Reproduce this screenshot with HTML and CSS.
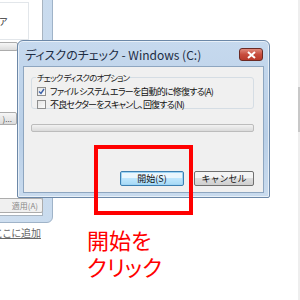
FILE: index.html
```html
<!DOCTYPE html>
<html lang="ja">
<head>
    <meta charset="UTF-8">
    <meta name="viewport" content="width=device-width, initial-scale=1.0">
    <title>ディスクのチェック</title>
    <link rel="stylesheet" href="styles.css">
</head>
<body>
    <div class="desktop">
        <!-- window behind the dialog -->
        <div class="bgwin">
            <div class="bgpane">
                <div class="bgbox"><span>ア</span></div>
                <div class="bgbtn bgbtn-a"></div>
                <div class="bgbtn bgbtn-b">)...</div>
                <div class="bgbtn bgbtn-apply">適用(A)</div>
            </div>
        </div>
        <a class="bglink">ここに追加</a>
        <div class="scroll-edge"><div class="scroll-thumb"></div></div>

        <div class="dialog">
            <div class="titlebar">
                <span class="title">ディスクのチェック - Windows (C:)</span>
                <button class="close">
                    <svg width="11" height="8" viewBox="0 0 11 8">
                        <path d="M2 1 L9 7 M9 1 L2 7" stroke="#fff" stroke-width="2" fill="none"/>
                    </svg>
                </button>
            </div>
            <div class="content">
                <fieldset class="group">
                    <legend>チェック ディスクのオプション</legend>
                    <label class="check">
                        <span class="box checked">
                            <svg width="7" height="7" viewBox="0 0 7 7">
                                <path d="M1 3.5 L3 5.5 L6 1" stroke="#3a5fa8" stroke-width="1.4" fill="none"/>
                            </svg>
                        </span>
                        ファイル システム エラーを自動的に修復する(A)
                    </label>
                    <label class="check">
                        <span class="box"></span>
                        不良セクターをスキャンし、回復する(N)
                    </label>
                </fieldset>
                <div class="progress"></div>
                <div class="actions">
                    <button class="btn default">開始(S)</button>
                    <button class="btn">キャンセル</button>
                </div>
            </div>
        </div>

        <div class="highlight"></div>
        <div class="note">開始を<br>クリック</div>
    </div>
</body>
</html>
```

FILE: styles.css
```css
body {
    margin: 0;
    background: #fff;
    font-family: "Noto Sans CJK JP", "Noto Sans", sans-serif;
    font-feature-settings: "palt";
}
.desktop {
    position: relative;
    width: 300px;
    height: 300px;
    overflow: hidden;
    background: #fff;
}
.bgwin {
    position: absolute;
    left: -120px;
    top: -10px;
    width: 171px;
    height: 231px;
    background: linear-gradient(to right, #dbe7f4, #c9dbee);
    border: 1px solid #9fb3c8;
    border-radius: 6px;
}
.bgpane {
    position: absolute;
    left: 0;
    top: 0;
    width: 161px;
    height: 224px;
    background: #fff;
    border-right: 1px solid #a8b4c0;
    border-bottom: 1px solid #a8b4c0;
}
.bgbox {
    position: absolute;
    left: 60px;
    top: 11px;
    width: 86px;
    height: 36px;
    border: 1px solid #e2e6ea;
    font-size: 9px;
    color: #333;
}
.bgbox span {
    position: absolute;
    left: 57px;
    top: 12px;
}
.bgbtn {
    position: absolute;
    background: linear-gradient(#f6f6f6, #dcdcdc);
    border: 1px solid #acacac;
    border-radius: 2px;
    font-size: 8px;
    color: #555;
    text-align: right;
    box-sizing: border-box;
    padding-right: 4px;
}
.bgbtn-a {
    left: 100px;
    top: 51px;
    width: 37px;
    height: 9px;
}
.bgbtn-b {
    left: 100px;
    top: 121px;
    width: 36px;
    height: 13px;
    line-height: 11px;
}
.bgbtn-apply {
    left: 100px;
    top: 207px;
    width: 62px;
    height: 15px;
    line-height: 13px;
    background: #f0f0f0;
    color: #888;
}
.bglink {
    position: absolute;
    left: -6px;
    top: 225px;
    font-size: 10px;
    color: #666;
    text-decoration: underline;
}
.scroll-edge {
    position: absolute;
    right: 0;
    top: 0;
    width: 2px;
    height: 300px;
    background: #eeeeee;
}
.scroll-thumb {
    margin-top: 87px;
    height: 45px;
    background: #c8c8c8;
}
.dialog {
    position: absolute;
    left: 17px;
    top: 40px;
    width: 253px;
    height: 158px;
    box-sizing: border-box;
    background: linear-gradient(#c6d9ee, #b9cfe7 60%, #c9dbee);
    border: 1px solid #6c88a8;
    border-radius: 6px 6px 2px 2px;
    padding: 0 5px 4px 5px;
    display: flex;
    flex-direction: column;
    box-shadow: 0 0 0 1px rgba(255, 255, 255, 0.6) inset;
}
.titlebar {
    height: 25px;
    display: flex;
    align-items: flex-start;
    justify-content: space-between;
    padding: 0 1px 0 2px;
}
.title {
    font-size: 12px;
    line-height: 14px;
    margin-top: 7px;
    color: #1d2d44;
}
.close {
    width: 24px;
    height: 13px;
    padding: 0;
    border: 1px solid #6b2a24;
    border-radius: 3px;
    background: linear-gradient(#e08a7c, #c74d3e 50%, #b8392a);
    display: flex;
    align-items: center;
    justify-content: center;
    margin-top: 7px;
}
.content {
    flex: 1;
    background: #f0f0f0;
    border: 1px solid #8ea6c0;
    padding: 6px 9px 0 7px;
}
.group {
    margin: 0;
    padding: 3px 6px 3px 5px;
    border: 1px solid #d5dde4;
    border-radius: 3px;
    height: 36px;
    box-sizing: border-box;
}
.group legend {
    font-size: 8.5px;
    letter-spacing: -0.9px;
    color: #222;
    padding: 0 1px;
    margin-left: -1px;
    line-height: 9px;
}
.check {
    display: flex;
    align-items: center;
    gap: 4px;
    font-size: 9px;
    letter-spacing: -0.8px;
    line-height: 13px;
    color: #111;
}
.box {
    width: 7px;
    height: 7px;
    border: 1px solid #8f8f8f;
    background: linear-gradient(135deg, #e4e4e4, #fbfbfb);
    display: flex;
    align-items: center;
    justify-content: center;
}
.progress {
    margin-top: 15px;
    height: 6px;
    border: 1px solid #bcbcbc;
    border-radius: 2px;
    background: linear-gradient(#f2f2f2, #dadada);
}
.actions {
    display: flex;
    justify-content: flex-end;
    gap: 10px;
    margin-top: 39px;
}
.btn {
    height: 15px;
    padding: 0;
    font-family: inherit;
    font-size: 9px;
    line-height: 12px;
    color: #111;
    border: 1px solid #707070;
    border-radius: 2px;
    background: linear-gradient(#f4f4f4 45%, #dddddd 50%, #cfcfcf);
    width: 60px;
}
.btn.default {
    width: 64px;
    border-color: #3c7fb1;
    background: linear-gradient(#eaf6fd 45%, #bee6fd 50%, #a7d9f5);
    box-shadow: 0 0 0 1px #9fd5f5 inset;
}
.highlight {
    position: absolute;
    left: 94px;
    top: 145px;
    width: 99px;
    height: 70px;
    box-sizing: border-box;
    border: 4px solid #ff0000;
}
.note {
    position: absolute;
    left: 87px;
    top: 226px;
    font-size: 22px;
    line-height: 27px;
    color: #ff0000;
}
```
